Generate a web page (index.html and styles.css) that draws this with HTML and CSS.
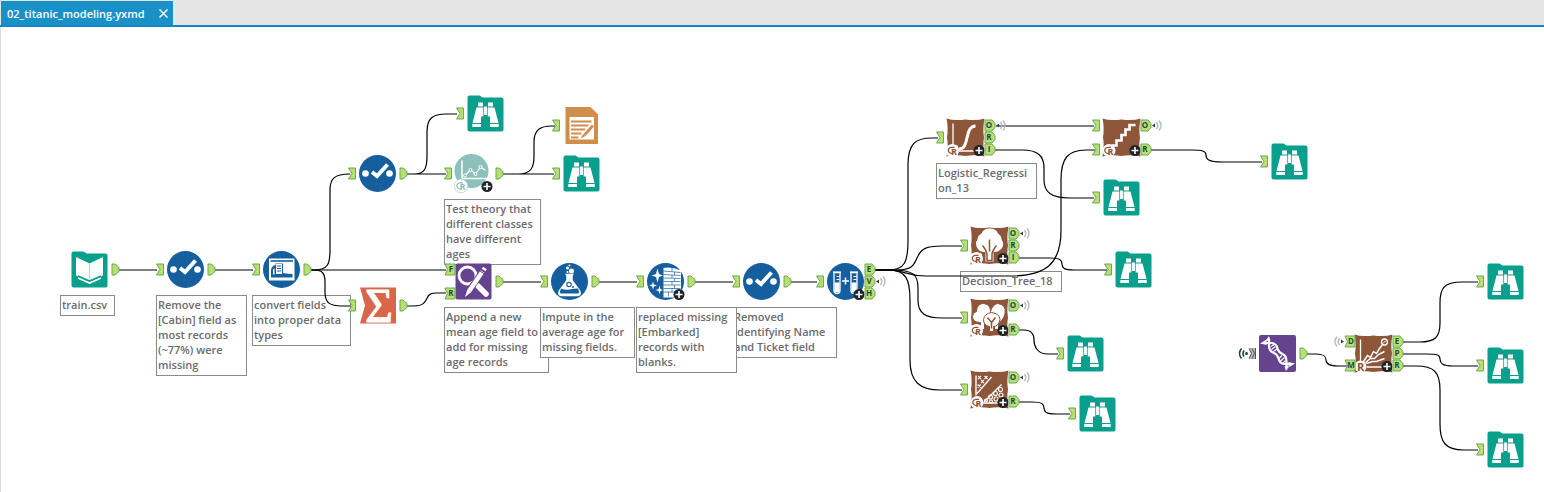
FILE: index.html
```html
<!DOCTYPE html>
<html lang="en">
<head>
<meta charset="utf-8">
<title>02_titanic_modeling.yxmd</title>
<link rel="stylesheet" href="styles.css">
</head>
<body>
<header class="tabs">
  <div class="tab">
    <span class="tab-name">02_titanic_modeling.yxmd</span>
    <button class="tab-close" type="button" aria-label="Close tab">
      <svg width="9" height="9" viewBox="0 0 9 9"><path d="M.5 .5 8.500 8.500M8.500 .5 .5 8.500"/></svg>
    </button>
  </div>
</header>
<main class="canvas">
  <p class="note note-train">train.csv</p>
  <p class="note note-remove">Remove the<br>[Cabin] field as<br>most records<br>(~77%) were<br>missing</p>
  <p class="note note-convert">convert fields<br>into proper data<br>types</p>
  <p class="note note-test">Test theory that<br>different classes<br>have different<br>ages</p>
  <p class="note note-append">Append a new<br>mean age field to<br>add for missing<br>age records</p>
  <p class="note note-impute">Impute in the<br>average age for<br>missing fields.</p>
  <p class="note note-removed">Removed<br>identifying Name<br>and Ticket field</p>
  <p class="note note-replaced">replaced missing<br>[Embarked]<br>records with<br>blanks.</p>
  <p class="note note-logistic">Logistic_Regressi<br>on_13</p>
  <p class="note note-tree">Decision_Tree_18</p>

  <svg class="flow" role="img" aria-label="Workflow">
    <defs>
      <path id="in" class="port" d="M-3.500 -5.500H3.500V5.500H-3.500L0 0Z"/>
      <path id="out" class="port" d="M-3.500 -5.500H-.5L3.500 -2V2L-.5 5.500H-3.500Z"/>
      <path id="in-wide" class="port" d="M-5 -5.500H5V5.500H-5L-2.500 0Z"/>
      <path id="out-wide" class="port" d="M-5 -5.500H2L5 -2V2L2 5.500H-5Z"/>
      <g id="radio">
        <path class="radio-tip" d="M-4 0 -1 -2V2Z"/>
        <path class="radio-wave" d="M.5 -3.500Q3 0 .5 3.500M3 -5Q7 0 3 5"/>
      </g>
      <g id="plus">
        <circle r="5.500" fill="#1f2326"/>
        <path d="M-3.500 0H3.500M0 -3.500V3.500" stroke="#fff" stroke-width="1.600"/>
      </g>
      <g id="r-mark">
        <circle r="6.500" fill="#fff"/>
        <path d="M1 2.500C-5 4.500 -6 -3 -1 -3.200H2" fill="none" stroke="currentColor" stroke-width="1.300"/>
        <text class="r-letter" x="1.500" y="4">R</text>
      </g>
      <g id="browse">
        <path fill="#08a08d" d="M-18 -16Q-18 -18 -16 -18H-6L-3 -16H16Q18 -16 18 -14V16Q18 18 16 18H-16Q-18 18 -18 16Z"/>
        <g fill="#fff">
          <path d="M-7.500 -11H-2.500V-7H-7.500ZM2.500 -11H7.500V-7H2.500Z"/>
          <path d="M-9 -6H-2.200V3H-4.500V9.500H-13ZM9 -6H2.200V3H4.500V9.500H13Z"/>
          <path d="M-1.400 -7H1.400V1.500H-1.400Z"/>
          <path d="M-13.200 10.500H-4.500V13.500H-13.200ZM13.200 10.500H4.500V13.500H13.200Z"/>
        </g>
      </g>
      <g id="input-data">
        <path fill="#08a08d" d="M-18 -16Q-18 -18 -16 -18H-6L-3 -16H16Q18 -16 18 -14V16Q18 18 16 18H-16Q-18 18 -18 16Z"/>
        <path fill="#fff" d="M-13.500 -12.500 0 -6 13.500 -12.500V6L0 11.500 -13.500 6Z"/>
        <path d="M0 -6V10" stroke="#8bd1c8" stroke-width=".8"/>
        <path d="M-11.500 6.500 0 11.500 11.500 6.500" fill="none" stroke="#08a08d" stroke-width="1.500"/>
        <path d="M-11.500 8.500 0 13.500 11.500 8.500" fill="none" stroke="#fff" stroke-width="1.800"/>
      </g>
      <g id="select">
        <circle class="blue" r="18.500"/>
        <circle cx="-12" r="3.300" fill="#fff"/><circle cx="12" r="3.300" fill="#fff"/>
        <path d="M-5.500 -1.500 -.5 2.500 10 -9" fill="none" stroke="#fff" stroke-width="4"/>
      </g>
      <g id="select-records">
        <circle class="blue" r="18.500"/>
        <path fill="#fff" d="M-12.500 -11H13V11H-12.500Z"/>
        <path d="M-11 -8.500H11.500" stroke="#155f9e" stroke-width="1.600"/>
        <path fill="#155f9e" d="M-10.500 8V0Q-9.500 -4 -6 -4.500V-6H1.500V3.500Q6 4.500 11 4.500V8Z"/>
        <path fill="#fff" d="M-5.500 -5.500H.5V4.500H-5.500ZM-8.500 5V0L-7 -1.500V5Z"/>
        <path d="M-4.500 -3.500H-.5M-4.500 -1H-.5M-4.500 1.500H-.5" stroke="#155f9e" stroke-width="1.100"/>
      </g>
      <g id="summarize">
        <path fill="#d9654a" d="M-18 -18H18V18H-18L-13 0Z"/>
        <text class="sigma" x="1" y="16">Σ</text>
      </g>
      <g id="plot">
        <circle cy="-2.500" cx="-2" r="17" fill="#8cc0bb"/>
        <path d="M-11.500 -13V4.500M-11.500 5H15" stroke="#fff" stroke-width="1.500"/>
        <path d="M-8.500 2 -3 -3.500 2 .5 7 -6.500 12 -3" fill="none" stroke="#fff" stroke-width="1.200"/>
        <g fill="#8cc0bb" stroke="#fff"><circle cx="-8.500" cy="2" r="1.500"/><circle cx="-3" cy="-3.500" r="1.500"/><circle cx="2" cy=".5" r="1.500"/><circle cx="7" cy="-6.500" r="1.500"/></g>
        <circle cx="-12.500" cy="12.500" r="7" fill="#a6d0cc"/>
        <use href="#r-mark" x="-12.500" y="12.500" color="#8cc0bb"/>
        <use href="#plus" x="13.500" y="13"/>
      </g>
      <g id="report">
        <path fill="#d08e4b" d="M-16 -18.500H9L16.500 -11V18.500H-16Z"/>
        <path fill="#fff" d="M-12 -8.500H12.500V14H-12Z"/>
        <path d="M-10.500 -4H10M-10.500 0H7M-10.500 4H4M-10.500 8H0M-10.500 12H-3" stroke="#d08e4b" stroke-width="1.900"/>
        <path d="M11 0 2 10" stroke="#fff" stroke-width="5"/>
        <path d="M11.500 0 3 9.500" stroke="#d08e4b" stroke-width="2.800"/>
        <path d="M-1 13 1.500 8.500 4 10.500Z" fill="#d08e4b"/>
      </g>
      <g id="find-replace">
        <rect x="-18" y="-18" width="36" height="36" rx="2" fill="#65438f"/>
        <circle cx="-6" cy="-6" r="8.500" fill="none" stroke="#fff" stroke-width="2.800"/>
        <path d="M0 0 5 5" stroke="#fff" stroke-width="2.500"/>
        <path d="M4.500 4.500 12.500 12.500" stroke="#fff" stroke-width="5.500" stroke-linecap="round"/>
        <path d="M9 -10 -5 10" stroke="#65438f" stroke-width="6.500"/>
        <path d="M9 -10 -4 9" stroke="#fff" stroke-width="4.500"/>
        <path d="M-6 7.500 -2 10.500 -8.500 15.500Z" fill="#fff"/>
        <path d="M6.500 -10.500 11 -7.500" stroke="#65438f"/>
        <path d="M10 -11.500 11.500 -13.500" stroke="#fff" stroke-width="4.500"/>
      </g>
      <g id="formula">
        <circle class="blue" r="18.500"/>
        <path d="M-4 -7H4M-2.500 -6V-1L-10 9Q-12 14 -8 14H8Q12 14 10 9L2.500 -1V-6Z" fill="#fff" stroke="#fff" stroke-width="1.500"/>
        <path d="M-8.500 7Q-4 9 0 8T8.500 7L9.500 10Q10 12 7.500 12H-7.500Q-10 12 -9.500 10Z" fill="#155f9e"/>
        <circle cx="-.5" cy="3" r="2.200" fill="#fff" stroke="#155f9e" stroke-width="1.200"/><circle cx="3.500" cy="5.500" r="1" fill="#155f9e"/>
        <g fill="#fff"><circle cx="2" cy="-10.500" r="2.500"/><circle cx="-2" cy="-13.500" r="1.500"/><circle cx="-2" cy="-9.500" r="1"/><circle cx="0" cy="-16" r="1"/></g>
      </g>
      <g id="cleanse">
        <circle class="blue" r="18.500"/>
        <path fill="#fff" d="M-2 -13.500Q6 -15 15.500 -11V12L9 16H-2Z"/>
        <path d="M-2 -10.500 15 -9M-2 -7 15 -6M-2 -3.500 15 -3M-2 0H15M-2 3.500H15M-2 7H15M-2 10.500H15M6.500 -14V-10M9 -9.500V-6.500M6.500 -6.500V-3.500M9 -3V0M6.500 0V3.500M9 3.500V7M6.500 7V10.500M3 10.500V15" stroke="#155f9e" stroke-width=".7"/>
        <g fill="#fff">
          <path d="M-8 -13 -6.500 -7.500 -2.500 -6 -6.500 -4.500 -8 1 -9.500 -4.500 -14 -6 -9.500 -7.500Z"/>
          <path d="M-12.500 0 -11.600 3 -8.500 4 -11.600 5 -12.500 8 -13.400 5 -16.500 4 -13.400 3Z"/>
          <path d="M-6 4 -5.100 7.500 -2.500 8.500 -5.100 9.500 -6 13 -6.900 9.500 -10 8.500 -6.900 7.500Z"/>
        </g>
        <use href="#plus" x="13.500" y="13"/>
      </g>
      <g id="samples">
        <circle class="blue" r="18.500"/>
        <g id="tube">
          <path d="M-12.500 -9H-4.500" stroke="#fff" stroke-width="2.200"/>
          <path d="M-11.500 -8V9Q-11.500 12 -8.500 12T-5.500 9V-8" fill="#155f9e" stroke="#fff" stroke-width="1.300"/>
          <path d="M-11 1H-6V9Q-6 11 -8.500 11T-11 9Z" fill="#fff"/>
          <path d="M-9 -5H-6M-9 -2H-6" stroke="#fff"/>
        </g>
        <use href="#tube" x="17"/>
        <path d="M-3.500 -.5H3.500M0 -4V3" stroke="#fff" stroke-width="1.500"/>
        <use href="#plus" x="13.500" y="13"/>
      </g>
      <path id="brown" fill="#8d5639" d="M-19 -19Q-12 -16.500 0 -18Q12 -16.500 19 -19Q17 -8 18.500 0Q17 8 19 19Q10 17 0 18.500Q-10 17 -19 19Q-17 8 -18.500 0Q-17 -10 -19 -19Z"/>
      <g id="logistic">
        <use href="#brown"/>
        <path d="M-12.500 -14V8M-7 13.500H9" stroke="#fff" stroke-width="1.300"/>
        <path d="M-7 11.500C5 12 -2 -11 10 -11.500" fill="none" stroke="#fff" stroke-width="3"/>
        <rect x="-18.500" y="7.500" width="11" height="11" rx="2" fill="#fff"/>
        <use href="#r-mark" x="-13" y="13" color="#8d5639"/>
        <use href="#plus" x="13.500" y="13"/>
      </g>
      <g id="stepwise">
        <use href="#brown"/>
        <path d="M-10 8H-5V3H0V-2.500H4V-8H8V-12.500H14" fill="none" stroke="#fff" stroke-width="2.600"/>
        <use href="#r-mark" x="-12.500" y="13" color="#8d5639"/>
        <use href="#plus" x="13.500" y="13"/>
      </g>
      <g id="tree">
        <use href="#brown"/>
        <path fill="#fff" d="M-8 -12Q-6 -17 0 -17Q7 -17 8.500 -12Q12 -10 12 -6Q15 -2 12.500 2.500Q9 7 4 6.500V16H-4V6.500Q-9 7 -12 3Q-15 -2 -12 -6Q-12 -10 -8 -12Z"/>
        <path d="M-2.500 15V8.500Q-3 5 -7 0M2.500 15V8.500Q3 5 7 0M0 -6V6M-3 15H3" fill="none" stroke="#8d5639" stroke-width="1.500"/>
        <rect x="-18.500" y="7.500" width="11" height="11" rx="2" fill="#fff"/>
        <use href="#r-mark" x="-13" y="13" color="#8d5639"/>
        <use href="#plus" x="13.500" y="13"/>
      </g>
      <g id="forest">
        <use href="#brown"/>
        <g fill="#fff" stroke="#8d5639" stroke-width="1">
          <path d="M8 -14Q17 -13 15.500 -4Q14 3 9 5V12H5V4Q-1 0 1 -6Q3 -13 8 -14Z"/>
          <path d="M-7 -14Q1 -14 1 -6Q1 4 -5 5V12H-9V5Q-17 5 -17 -1Q-17 -5 -13 -6Q-13 -13 -7 -14Z"/>
          <path d="M2 -5Q10 -4 10.500 2Q9 9 4 9V14H0V9Q-6 8 -6 2Q-5 -4 2 -5Z"/>
        </g>
        <path d="M2 11V5L-2 0M2 5 6 0" fill="none" stroke="#8d5639" stroke-width="1.500"/>
        <rect x="-18.500" y="7.500" width="11" height="11" rx="2" fill="#fff"/>
        <use href="#r-mark" x="-13" y="13" color="#8d5639"/>
        <use href="#plus" x="13.500" y="13"/>
      </g>
      <g id="svm">
        <use href="#brown"/>
        <path d="M-13.500 -14V6M-12.500 4 2 -12.500M-5 12 12 -5M-7 13.500H9" stroke="#fff" stroke-width="1.400"/>
        <path d="M-11.500 -13.500l3 3m0 -3l-3 3M-5 -13.500l3 3m0 -3l-3 3M-8.500 -9.500l3 3m0 -3l-3 3M-11.800 -5l3 3m0 -3l-3 3" stroke="#fff" stroke-width="1.100"/>
        <g fill="none" stroke="#fff" stroke-width="1.100"><circle cx="11" cy="0" r="2"/><circle cx="6" cy="4" r="2"/><circle cx="11.500" cy="5.500" r="2"/><circle cx="1" cy="7.500" r="2"/><circle cx="6.500" cy="9.500" r="2"/><circle cx="-3.500" cy="11" r="1.500"/><circle cx="1.500" cy="12" r="1.500"/></g>
        <use href="#r-mark" x="-12.500" y="13" color="#8d5639"/>
        <use href="#plus" x="13.500" y="13"/>
      </g>
      <g id="dna">
        <rect x="-18.500" y="-18.500" width="37" height="37" rx="2" fill="#65438f"/>
        <g fill="none" stroke="#fff" stroke-width="2.200">
          <path d="M-8.500 -14V-8Q-8.500 -2 -3.500 -.5Q0 1 1 5Q2 10 7 10.500H14"/>
          <path d="M-14 -10.500H-6Q-1 -10 0 -5Q1 -1 5 .5Q9 2 9 8V14"/>
        </g>
        <path d="M-12 -12.500 -8.500 -17.500 -7 -13ZM-17.500 -10 -11 -14V-8.500ZM17.500 10 11 8.500V14ZM12 12.500 8.500 17.500 7 13Z" fill="#fff"/>
        <path d="M-6.500 -7 -3.500 -9M-6 -4 -2 -7M-4 -2 -.5 -4.500M1.500 5 4.500 2M2.500 8 7 4M5.500 9.500 8 7" stroke="#fff" stroke-width="1.100"/>
      </g>
      <g id="score">
        <use href="#brown"/>
        <path d="M-13 -14V8M-7 13.500H9" stroke="#fff" stroke-width="1.300"/>
        <path d="M-10 8 -6 2 -3 4 0 -2 3 0 6 -5 9 -9M-8 9 -3 5 1 5 5 1 11 -2M-7 10 -1 8 3 8 11 5" fill="none" stroke="#fff" stroke-width="1.500"/>
        <circle cx="11" cy="-11.500" r="3" fill="none" stroke="#fff" stroke-width="1.300"/>
        <path d="M9.500 -10 12.500 -13" stroke="#fff"/>
        <circle cx="-13" cy="13" r="6" fill="#fff"/>
        <text class="r-plain" x="-13" y="17">R</text>
        <use href="#plus" x="13.500" y="13"/>
      </g>
    </defs>

    <!-- Drawn below the tab strip -->
    <g transform="translate(0 -27)">
      <g class="wires">
        <path d="M118 270H157M214 270H253M308 270H446"/>
        <path d="M308 270H314C328 270 330 264 330 250V190C330 179 334 174 350 174"/>
        <path d="M308 270H314C323 270 325 274 325 282V292C325 303 330 306 342 306H350"/>
        <path d="M406 306H414C431 306 423 293 435 293H446"/>
        <path d="M406 174H446M406 174H414C425 174 427 168 427 156V132C427 118 433 114 446 114H457"/>
        <path d="M502 174H554M502 174H518C531 174 534 168 534 156V142C534 130 540 126 552 126H555"/>
        <path d="M502 282H541M598 282H637M694 282H733M790 282H817"/>
        <path d="M874 270H888C905 270 908 262 908 240V165C908 144 915 138 932 138H938"/>
        <path d="M874 270H896C915 270 914 263 918 256C922 247 930 246 942 246H962"/>
        <path d="M874 270H888C904 270 907 276 926 276H1010C1046 276 1061 264 1061 230V180C1061 158 1068 150 1086 150H1095"/>
        <path d="M874 270H892C914 270 918 275 918 288V300C918 314 926 318 942 318H962"/>
        <path d="M874 270H888C906 270 910 279 910 300V360C910 382 920 390 940 390H962"/>
        <path d="M996 126H1094"/>
        <path d="M994 150H1022C1038 150 1044 156 1044 168V180C1044 192 1051 198 1070 198H1094"/>
        <path d="M1150 150H1192C1202 150 1206 151 1206 155S1208 162 1222 162H1262"/>
        <path d="M1018 258H1050C1060 258 1062 260 1062 264S1064 270 1074 270H1107"/>
        <path d="M1018 330H1024C1032 330 1034 334 1034 340S1037 354 1048 354H1058"/>
        <path d="M1018 402H1032C1042 402 1044 404 1044 408S1046 414 1056 414H1070"/>
        <path d="M1306 354H1316C1325 354 1326 357 1326 360S1328 366 1338 366H1347"/>
        <path d="M1402 342H1420C1435 342 1440 337 1440 323V303C1440 288 1444 282 1462 282H1478"/>
        <path d="M1402 354H1426C1438 354 1440 355 1440 359S1442 366 1453 366H1478"/>
        <path d="M1402 366H1416C1434 366 1440 372 1440 390V424C1440 442 1445 450 1464 450H1478"/>
      </g>

      <g>
        <use href="#input-data" x="89.500" y="269.500"/>
        <use href="#select" x="185.500" y="269.500"/>
        <use href="#select-records" x="281.500" y="269.500"/>
        <use href="#summarize" x="378" y="305.500"/>
        <use href="#select" x="377.500" y="173.500"/>
        <use href="#browse" x="485.500" y="113.500"/>
        <use href="#plot" x="473.500" y="173.500"/>
        <use href="#report" x="581.500" y="125.500"/>
        <use href="#browse" x="581.500" y="173.500"/>
        <use href="#find-replace" x="473.500" y="281.500"/>
        <use href="#formula" x="569.500" y="281.500"/>
        <use href="#cleanse" x="665.500" y="281.500"/>
        <use href="#select" x="761.500" y="281.500"/>
        <use href="#samples" x="845.500" y="281.500"/>
        <use href="#logistic" x="965.500" y="137.500"/>
        <use href="#stepwise" x="1121.500" y="137.500"/>
        <use href="#browse" x="1121.500" y="197.500"/>
        <use href="#browse" x="1289.500" y="161.500"/>
        <use href="#tree" x="989.500" y="245.500"/>
        <use href="#browse" x="1133.500" y="269.500"/>
        <use href="#forest" x="989.500" y="317.500"/>
        <use href="#browse" x="1085.500" y="353.500"/>
        <use href="#svm" x="989.500" y="389.500"/>
        <use href="#browse" x="1097.500" y="413.500"/>
        <use href="#dna" x="1277.500" y="353.500"/>
        <use href="#score" x="1373.500" y="353.500"/>
        <use href="#browse" x="1505.500" y="281.500"/>
        <use href="#browse" x="1505.500" y="365.500"/>
        <use href="#browse" x="1505.500" y="449.500"/>
      </g>

      <g>
        <use href="#out" x="115.500" y="269.500"/>
        <use href="#in" x="160" y="269.500"/><use href="#out" x="211.500" y="269.500"/>
        <use href="#in" x="256" y="269.500"/><use href="#out" x="307.500" y="269.500"/>
        <use href="#in" x="352" y="305.500"/><use href="#out" x="403.500" y="305.500"/>
        <use href="#in" x="352" y="173.500"/><use href="#out" x="403.500" y="173.500"/>
        <use href="#in" x="460" y="113.500"/>
        <use href="#in" x="448" y="173.500"/><use href="#out" x="499.500" y="173.500"/>
        <use href="#in" x="556" y="125.500"/><use href="#in" x="556" y="173.500"/>
        <use href="#out" x="499.500" y="281.500"/>
        <use href="#in" x="544" y="281.500"/><use href="#out" x="595.500" y="281.500"/>
        <use href="#in" x="640" y="281.500"/><use href="#out" x="691.500" y="281.500"/>
        <use href="#in" x="736" y="281.500"/><use href="#out" x="787.500" y="281.500"/>
        <use href="#in" x="820" y="281.500"/>
        <use href="#in" x="940" y="137.500"/>
        <use href="#in" x="1096" y="125.500"/><use href="#in" x="1096" y="149.500"/>
        <use href="#in" x="1096" y="197.500"/><use href="#in" x="1264" y="161.500"/>
        <use href="#in" x="964" y="245.500"/><use href="#in" x="1108" y="269.500"/>
        <use href="#in" x="964" y="317.500"/><use href="#in" x="1060" y="353.500"/>
        <use href="#in" x="964" y="389.500"/><use href="#in" x="1072" y="413.500"/>
        <use href="#out" x="1303.500" y="353.500"/>
        <use href="#in" x="1480" y="281.500"/><use href="#in" x="1480" y="365.500"/><use href="#in" x="1480" y="449.500"/>
      </g>

      <g class="port-label">
        <use href="#in-wide" x="450" y="269.500"/><text x="451" y="272">F</text>
        <use href="#in-wide" x="450" y="293.500"/><text x="451" y="296">R</text>
        <use href="#out-wide" x="870" y="269.500"/><text x="869" y="272">E</text>
        <use href="#out-wide" x="870" y="281.500"/><text x="869" y="284">V</text>
        <use href="#out-wide" x="870" y="293.500"/><text x="869" y="296">H</text>
        <use href="#out-wide" x="990" y="125.500"/><text x="989" y="128">O</text>
        <use href="#out-wide" x="990" y="137.500"/><text x="989" y="140">R</text>
        <use href="#out-wide" x="990" y="149.500"/><text x="989" y="152">I</text>
        <use href="#out-wide" x="1146" y="125.500"/><text x="1145" y="128">O</text>
        <use href="#out-wide" x="1146" y="149.500"/><text x="1145" y="152">R</text>
        <use href="#out-wide" x="1014" y="233.500"/><text x="1013" y="236">O</text>
        <use href="#out-wide" x="1014" y="245.500"/><text x="1013" y="248">R</text>
        <use href="#out-wide" x="1014" y="257.500"/><text x="1013" y="260">I</text>
        <use href="#out-wide" x="1014" y="305.500"/><text x="1013" y="308">O</text>
        <use href="#out-wide" x="1014" y="329.500"/><text x="1013" y="332">R</text>
        <use href="#out-wide" x="1014" y="377.500"/><text x="1013" y="380">O</text>
        <use href="#out-wide" x="1014" y="401.500"/><text x="1013" y="404">R</text>
        <use href="#in-wide" x="1350" y="341.500"/><text x="1351" y="344">D</text>
        <use href="#in-wide" x="1350" y="365.500"/><text x="1351" y="368">M</text>
        <use href="#out-wide" x="1398" y="341.500"/><text x="1397" y="344">E</text>
        <use href="#out-wide" x="1398" y="353.500"/><text x="1397" y="356">P</text>
        <use href="#out-wide" x="1398" y="365.500"/><text x="1397" y="368">R</text>
      </g>

      <use href="#radio" x="880" y="281.500"/>
      <use href="#radio" x="1000" y="125.500"/>
      <use href="#radio" x="1156" y="125.500"/>
      <use href="#radio" x="1024" y="233.500"/>
      <use href="#radio" x="1024" y="305.500"/>
      <use href="#radio" x="1024" y="377.500"/>
      <use href="#radio" transform="translate(1340 341.500) scale(-1 1)"/>
      <g class="radio-dark">
        <path d="M1244 350.500Q1242 353.500 1244 356.500M1241.500 348.500Q1237.500 353.500 1241.500 358.500"/>
        <circle cx="1246.500" cy="353.500" r="1.500"/>
      </g>
      <path d="M1249 348H1255.500V359H1249L1251 353.500Z" fill="#b5b5b5"/>
      <path d="M1249 348.500 1251.500 353.500 1249 358.500M1252 348.500 1254.500 353.500 1252 358.500M1255.500 348V359" fill="none" stroke="#555" stroke-width="1"/>
    </g>
  </svg>
</main>
</body>
</html>
```
FILE: styles.css
```css
* {
  box-sizing: border-box;
}

body {
  display: flex;
  flex-direction: column;
  min-height: 100vh;
  margin: 0;
  background: #fff;
  font-family: "Open Sans", "Noto Sans", sans-serif;
}

.tabs {
  display: flex;
  height: 27px;
  padding: 1px 0 0 1px;
  background: #e5e5e5;
  border-bottom: 2px solid #1287c8;
}

.tab {
  display: flex;
  align-items: center;
  gap: 14px;
  padding: 0 5px 0 6px;
  background: #1991c7;
  color: #fff;
}

.tab-name {
  font-size: 11px;
  font-weight: 600;
  line-height: 15px;
}

.tab-close {
  display: flex;
  padding: 0;
  border: 0;
  background: none;
}

.tab-close path {
  stroke: #fff;
  stroke-width: 1.500;
}

.canvas {
  position: relative;
  flex: 1;
  overflow: hidden;
  border-left: 1px solid #dcdcdc;
}

.flow {
  position: absolute;
  top: 0;
  left: -1px;
  width: 100%;
  height: 100%;
}

/* Annotations on the workflow canvas */
.note {
  position: absolute;
  margin: 0;
  padding: 1px 1px 3px;
  border: 1px solid #8a8a8a;
  background: #fff;
  color: #6c6c6c;
  font-size: 11px;
  font-weight: 600;
  line-height: 15px;
  white-space: nowrap;
}

.note-train { left: 59px; top: 268px; width: 55px; }
.note-remove { left: 155px; top: 268px; width: 91px; }
.note-convert { left: 251px; top: 268px; width: 99px; }
.note-test { left: 443px; top: 172px; width: 97px; }
.note-append { left: 443px; top: 280px; width: 105px; }
.note-impute { left: 539px; top: 280px; width: 95px; }
.note-removed { left: 731px; top: 280px; width: 105px; }
.note-replaced { left: 635px; top: 280px; width: 101px; }
.note-logistic { left: 935px; top: 136px; width: 101px; }
.note-tree { left: 959px; top: 244px; width: 102px; }

.wires {
  fill: none;
  stroke: #000;
  stroke-width: 1.200;
}

.port {
  fill: #b8e070;
  stroke: #6fa658;
  stroke-width: 1;
}

.port-label text {
  fill: #1f4a4a;
  font-size: 8px;
  font-weight: 700;
  text-anchor: middle;
}

.blue {
  fill: #155f9e;
}

.radio-tip {
  fill: #2b4a50;
}

.radio-wave {
  fill: none;
  stroke: #b4bec0;
  stroke-width: 1.500;
}

.radio-dark {
  fill: #1d4347;
}

.radio-dark path {
  fill: none;
  stroke: #1d4347;
  stroke-width: 1.600;
}

.r-letter {
  fill: currentColor;
  font-size: 9px;
  font-weight: 700;
  text-anchor: middle;
}

.r-plain {
  fill: #8d5639;
  font-size: 11px;
  font-weight: 700;
  text-anchor: middle;
}

.sigma {
  fill: #fff;
  stroke: #fff;
  stroke-width: 1;
  font-family: "Liberation Serif", serif;
  font-size: 48px;
  text-anchor: middle;
}
```
